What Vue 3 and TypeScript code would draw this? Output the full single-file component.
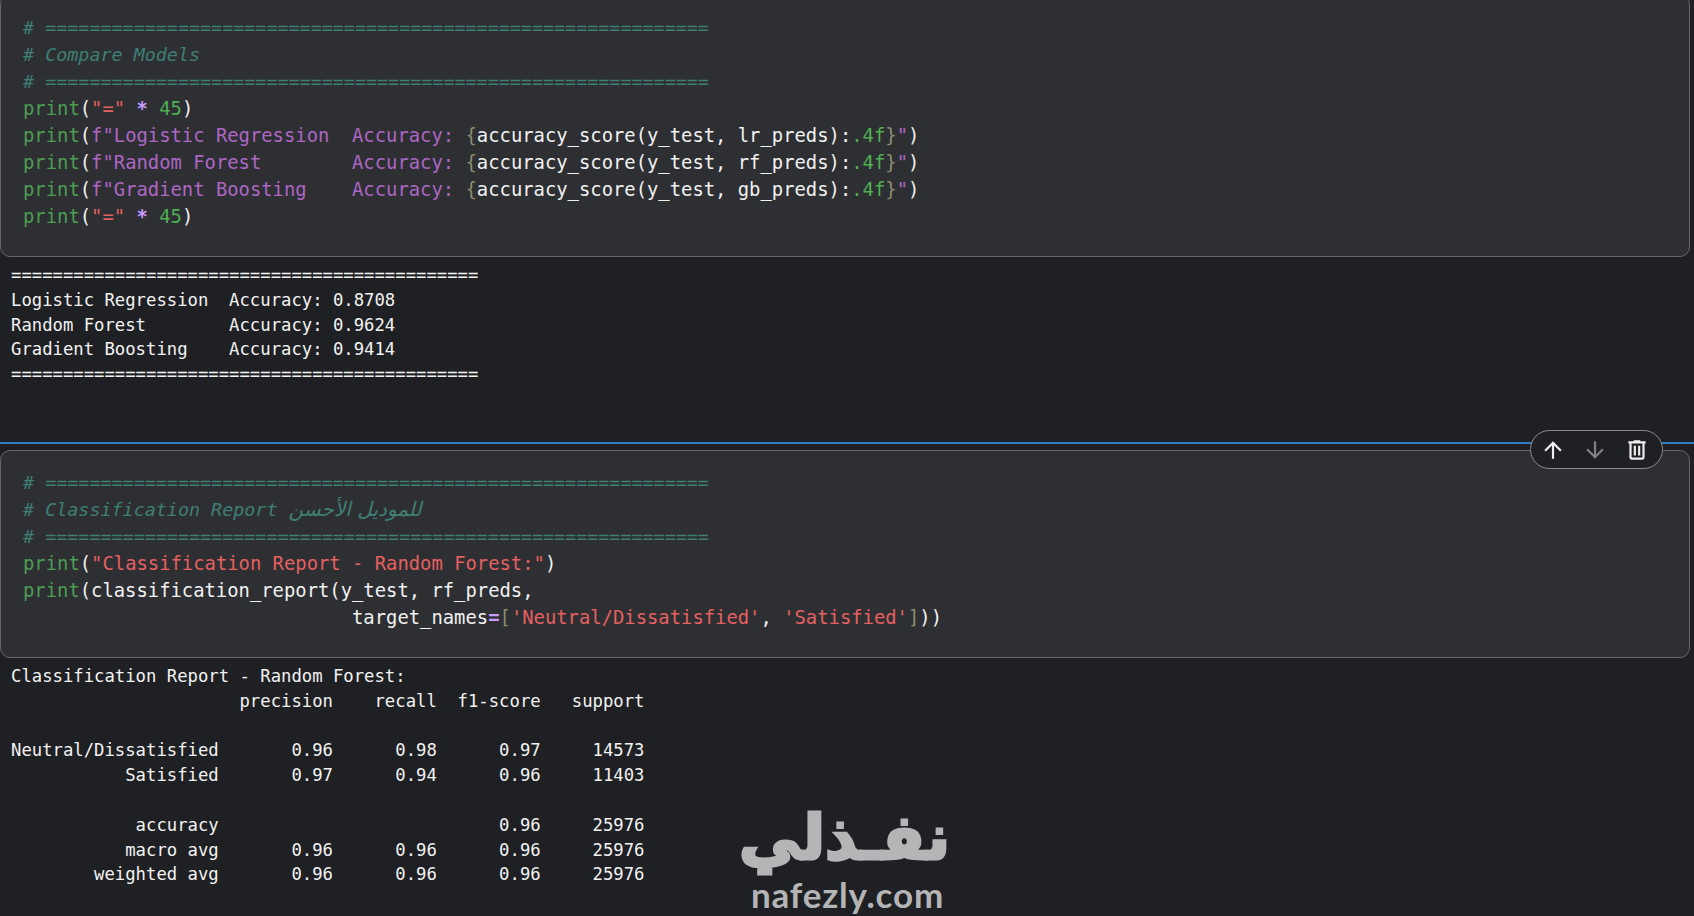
<script setup lang="ts">
type Tok = [string, string];
const bar = '# ' + '='.repeat(60);
const fLine = (label: string, v: string): Tok[] => [
  ['fn', 'print'], ['w', '('], ['fs', 'f"' + label + 'Accuracy: '], ['br', '{'],
  ['w', `accuracy_score(y_test, ${v}_preds):`], ['n', '.4f'], ['br', '}'], ['fs', '"'], ['w', ')'],
];
const eqLine: Tok[] = [['fn', 'print'], ['w', '('], ['s', '"="'], ['w', ' '], ['op', '*'], ['w', ' '], ['n', '45'], ['w', ')']];
const cell1: Tok[][] = [
  [['c', bar]], [['c', '# Compare Models']], [['c', bar]],
  eqLine,
  fLine('Logistic Regression  ', 'lr'),
  fLine('Random Forest        ', 'rf'),
  fLine('Gradient Boosting    ', 'gb'),
  eqLine,
];
const cell2: Tok[][] = [
  [['c', bar]], [['c', '# Classification Report '], ['c ar', 'للموديل الأحسن']], [['c', bar]],
  [['fn', 'print'], ['w', '('], ['s', '"Classification Report - Random Forest:"'], ['w', ')']],
  [['fn', 'print'], ['w', '(classification_report(y_test, rf_preds,']],
  [['w', ' '.repeat(29) + 'target_names'], ['op', '='], ['br', '['], ['s', "'Neutral/Dissatisfied'"], ['w', ', '], ['s', "'Satisfied'"], ['br', ']'], ['w', '))']],
];
const eq45 = '='.repeat(45);
const out1 = `${eq45}
Logistic Regression  Accuracy: 0.8708
Random Forest        Accuracy: 0.9624
Gradient Boosting    Accuracy: 0.9414
${eq45}`;
const out2 = `Classification Report - Random Forest:
                      precision    recall  f1-score   support

Neutral/Dissatisfied       0.96      0.98      0.97     14573
           Satisfied       0.97      0.94      0.96     11403

            accuracy                           0.96     25976
           macro avg       0.96      0.96      0.96     25976
        weighted avg       0.96      0.96      0.96     25976`;
</script>

<template>
  <div class="page">
    <section class="cell first">
      <div v-for="(line, i) in cell1" :key="i" class="line">
        <span v-for="(t, j) in line" :key="j" :class="t[0]">{{ t[1] }}</span>
      </div>
    </section>
    <pre class="output out-a">{{ out1 }}</pre>

    <div class="selected">
      <div class="toolbar">
        <svg viewBox="0 0 24 24" class="ico"><path d="M4 12l1.41 1.41L11 7.83V20h2V7.83l5.58 5.59L20 12l-8-8-8 8z" /></svg>
        <svg viewBox="0 0 24 24" class="ico dim"><path d="M20 12l-1.41-1.41L13 16.17V4h-2v12.17l-5.58-5.59L4 12l8 8 8-8z" /></svg>
        <svg viewBox="0 0 24 24" class="ico"><path fill-rule="evenodd" d="M15 4V3H9v1H4v2h1v13c0 1.1.9 2 2 2h10c1.1 0 2-.9 2-2V6h1V4h-5zm2 15H7V6h10v13zM9 8h2v9H9zm4 0h2v9h-2z" /></svg>
      </div>
      <section class="cell second">
        <div v-for="(line, i) in cell2" :key="i" class="line">
          <span v-for="(t, j) in line" :key="j" :class="t[0]">{{ t[1] }}</span>
        </div>
      </section>
      <pre class="output out-b">{{ out2 }}</pre>
    </div>

    <div class="logo">
      <div class="logo-ar" dir="rtl">نفـذلي</div>
      <div class="logo-en">nafezly.com</div>
    </div>
  </div>
</template>

<style>
html, body { background: #1f2023; }
</style>

<style scoped>
.page {
  position: relative;
  height: 916px;
  overflow: hidden;
  background: #1f2023;
}
.cell {
  margin-right: 4px;
  padding: 19px 22px 26px;
  background: #2e2f33;
  border: 1px solid #66676a;
  border-radius: 10px;
  font: 18.85px/27px "DejaVu Sans Mono", "Noto Sans", monospace;
}
.first { margin-top: -6px; }
.second { padding-top: 18px; }
.line { height: 27px; white-space: pre; color: #f1f1f1; }
.c { color: #3f7f73; font-style: italic; font-size: 18.39px; }
.ar { font-family: "DejaVu Sans", sans-serif; font-size: 20px; }
.fn { color: #4c9d52; }
.w { color: #f1f1f1; }
.s { color: #e56060; }
.fs { color: #ad66c4; }
.br { color: #8d8d6e; }
.n { color: #4fb053; }
.op { color: #c79cff; font-weight: 700; }
.output {
  margin: 0;
  padding-left: 11px;
  font: 17.26px/24.8px "DejaVu Sans Mono", monospace;
  color: #f2f2f2;
}
.out-a { padding-top: 6px; height: 185px; box-sizing: border-box; }
.out-b { padding-top: 6px; }
.selected {
  position: relative;
  border-top: 2px solid #2f7fc4;
  padding-top: 6px;
}
.toolbar {
  position: absolute;
  top: -14px;
  right: 31px;
  width: 133px;
  height: 39px;
  box-sizing: border-box;
  display: flex;
  align-items: center;
  justify-content: center;
  gap: 16px;
  padding-right: 3px;
  background: #1f2023;
  border: 1px solid #8a8b8e;
  border-radius: 20px;
  z-index: 1;
}
.ico { width: 26px; height: 26px; fill: #eeeeee; }
.dim { fill: #808184; }
.logo {
  position: absolute;
  left: 745px;
  top: 802px;
  width: 205px;
  text-align: center;
  color: #b4b5b6;
}
.logo-ar {
  font: 700 62px/72px "DejaVu Sans", sans-serif;
  -webkit-text-stroke: 3px #b4b5b6;
}
.logo-en {
  font: 700 35px/40px "Lato", sans-serif;
  letter-spacing: 0.8px;
}
</style>
